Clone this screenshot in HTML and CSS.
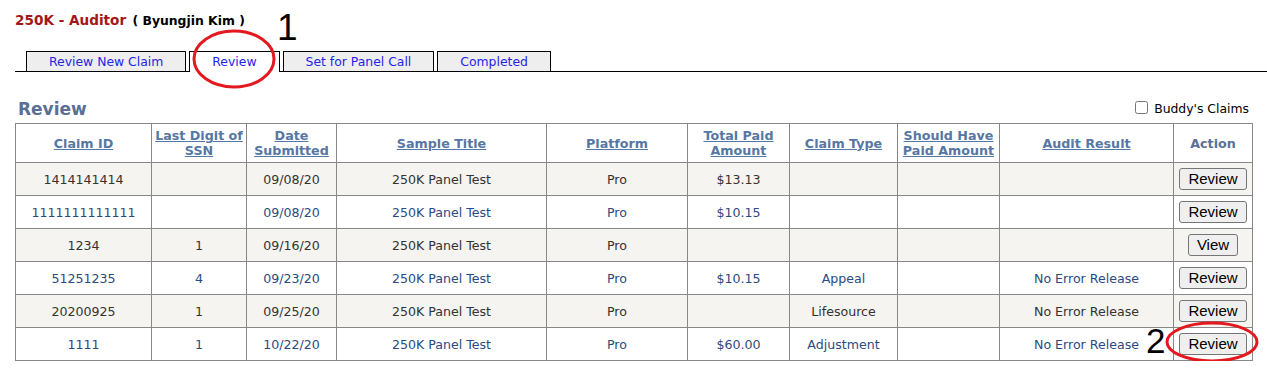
FILE: index.html
```html
<!DOCTYPE html>
<html lang="en">

    <head>
        <meta charset="UTF-8">
        <meta name="viewport" content="width=device-width, initial-scale=1.0">
        <title>Auditor Review</title>
        <link rel="stylesheet" href="styles.css">
    </head>

    <body>
        <div class="page">
            <div class="title">
                <span class="role">250K - Auditor</span>
                <span class="user">( Byungjin Kim )</span>
            </div>

            <div class="tabs">
                <a class="tab">Review New Claim</a>
                <a class="tab active">Review</a>
                <a class="tab">Set for Panel Call</a>
                <a class="tab">Completed</a>
            </div>

            <div class="heading">
                <h2>Review</h2>
                <label class="buddy"><input type="checkbox"> Buddy's Claims</label>
            </div>

            <table class="claims">
                <colgroup>
                    <col style="width:136px">
                    <col style="width:95px">
                    <col style="width:90px">
                    <col style="width:210px">
                    <col style="width:141px">
                    <col style="width:102px">
                    <col style="width:108px">
                    <col style="width:102px">
                    <col style="width:174px">
                    <col style="width:79px">
                </colgroup>
                <thead>
                    <tr>
                        <th><a>Claim ID</a></th>
                        <th><a>Last Digit of SSN</a></th>
                        <th><a>Date Submitted</a></th>
                        <th><a>Sample Title</a></th>
                        <th><a>Platform</a></th>
                        <th><a>Total Paid Amount</a></th>
                        <th><a>Claim Type</a></th>
                        <th><a>Should Have Paid Amount</a></th>
                        <th><a>Audit Result</a></th>
                        <th>Action</th>
                    </tr>
                </thead>
                <tbody>
                    <tr>
                        <td>1414141414</td>
                        <td></td>
                        <td>09/08/20</td>
                        <td>250K Panel Test</td>
                        <td>Pro</td>
                        <td>$13.13</td>
                        <td></td>
                        <td></td>
                        <td></td>
                        <td><button>Review</button></td>
                    </tr>
                    <tr>
                        <td>1111111111111</td>
                        <td></td>
                        <td>09/08/20</td>
                        <td>250K Panel Test</td>
                        <td>Pro</td>
                        <td>$10.15</td>
                        <td></td>
                        <td></td>
                        <td></td>
                        <td><button>Review</button></td>
                    </tr>
                    <tr>
                        <td>1234</td>
                        <td>1</td>
                        <td>09/16/20</td>
                        <td>250K Panel Test</td>
                        <td>Pro</td>
                        <td></td>
                        <td></td>
                        <td></td>
                        <td></td>
                        <td><button>View</button></td>
                    </tr>
                    <tr>
                        <td>51251235</td>
                        <td>4</td>
                        <td>09/23/20</td>
                        <td>250K Panel Test</td>
                        <td>Pro</td>
                        <td>$10.15</td>
                        <td>Appeal</td>
                        <td></td>
                        <td>No Error Release</td>
                        <td><button>Review</button></td>
                    </tr>
                    <tr>
                        <td>20200925</td>
                        <td>1</td>
                        <td>09/25/20</td>
                        <td>250K Panel Test</td>
                        <td>Pro</td>
                        <td></td>
                        <td>Lifesource</td>
                        <td></td>
                        <td>No Error Release</td>
                        <td><button>Review</button></td>
                    </tr>
                    <tr>
                        <td>1111</td>
                        <td>1</td>
                        <td>10/22/20</td>
                        <td>250K Panel Test</td>
                        <td>Pro</td>
                        <td>$60.00</td>
                        <td>Adjustment</td>
                        <td></td>
                        <td>No Error Release</td>
                        <td><button>Review</button></td>
                    </tr>
                </tbody>
            </table>
        </div>

        <!-- annotation marks drawn over the screen -->
        <svg class="marks" width="1267" height="372">
            <ellipse cx="234" cy="59" rx="40" ry="28" />
            <ellipse cx="1212" cy="342" rx="45" ry="19" />
        </svg>
        <span class="note note-1">1</span>
        <span class="note note-2">2</span>
    </body>

</html>
```

FILE: styles.css
```css
* {
    margin: 0;
    padding: 0;
    box-sizing: border-box;
}

body {
    position: relative;
    font-family: "DejaVu Sans", Verdana, sans-serif;
    font-size: 12.4px;
    color: #000;
    background: #fff;
}

.page {
    padding: 12px 0 0 15px;
}

.title {
    line-height: 16px;
    font-weight: bold;
}

.role {
    font-size: 13.6px;
    color: #a3161a;
}

.user {
    font-size: 12.4px;
    margin-left: 2px;
}

.tabs {
    display: flex;
    align-items: flex-end;
    margin-top: 22px;
    padding-left: 11px;
    border-bottom: 1px solid #000;
}

.tab {
    display: block;
    margin-right: 3px;
    padding: 0 22px;
    line-height: 19px;
    border: 1px solid #000;
    border-bottom: none;
    background: #eee;
    color: #2424e8;
    cursor: pointer;
}

.tab.active {
    background: #fff;
    line-height: 20px;
    margin-bottom: -1px;
}

.heading {
    display: flex;
    justify-content: space-between;
    align-items: baseline;
    width: 1237px;
    margin-top: 27px;
    padding: 0 3px 0 3px;
}

.heading h2 {
    font-size: 17px;
    line-height: 20px;
    color: #5b6f92;
}

.buddy {
    display: flex;
    align-items: center;
}

.buddy input {
    width: 13px;
    height: 13px;
    margin: 0 6px 0 0;
    position: relative;
    top: -1px;
}

.claims {
    width: 1237px;
    margin-top: 4px;
    table-layout: fixed;
    border-collapse: collapse;
    border: 1px solid #888;
}

.claims th,
.claims td {
    border: 1px solid #888;
    text-align: center;
    vertical-align: middle;
    padding: 0 2px;
}

.claims th {
    height: 39px;
    font-size: 12.7px;
    line-height: 15px;
    font-weight: bold;
    color: #5a7099;
}

.claims th a {
    color: #5677a3;
    text-decoration: underline;
    cursor: pointer;
}

.claims td {
    height: 33px;
    font-size: 12.6px;
    color: #2b4b7f;
}

.claims tbody tr:nth-child(odd) td {
    background: #f5f4f0;
    color: #333;
}

button {
    font-family: "Liberation Sans", Arial, sans-serif;
    font-size: 15px;
    line-height: 18px;
    padding: 1px 8px;
    color: #000;
    background: #efefef;
    border: 1px solid #767676;
    border-radius: 3px;
    cursor: pointer;
}

.marks {
    position: absolute;
    top: 0;
    left: 0;
    pointer-events: none;
}

.marks ellipse {
    fill: none;
    stroke: #e3191f;
    stroke-width: 3;
}

.note {
    position: absolute;
    font-family: "Liberation Sans", Arial, sans-serif;
    color: #000;
    line-height: 1;
}

.note-1 {
    left: 277px;
    top: 9px;
    font-size: 37px;
}

.note-2 {
    left: 1146px;
    top: 323px;
    font-size: 35px;
}
```
